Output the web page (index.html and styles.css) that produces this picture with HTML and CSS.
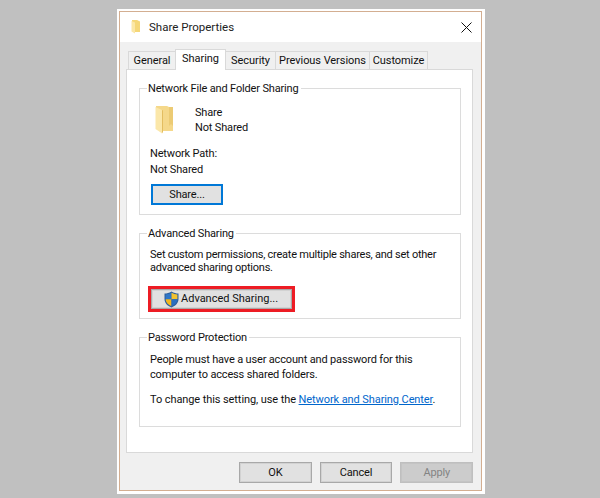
FILE: index.html
```html
<!DOCTYPE html>
<html lang="en">
<head>
<meta charset="utf-8">
<title>Share Properties</title>
<link rel="stylesheet" href="styles.css">
</head>
<body>
<div class="dialog">
  <header class="titlebar">
    <svg class="title-icon" width="10" height="14" viewBox="0 0 10 14">
      <path d="M1 0H6L9 1.5V12H4L1 10Z" fill="#f5d778"/>
      <path d="M0.5 1L4 2.5V13.5L0.5 11.5Z" fill="#fbe7a6"/>
    </svg>
    <span class="title">Share Properties</span>
    <svg class="close" width="11" height="11" viewBox="0 0 11 11">
      <path d="M0.5 0.5L10.5 10.5M10.5 0.5L0.5 10.5" stroke="#111" stroke-width="1" fill="none"/>
    </svg>
  </header>
  <main class="body">
    <nav class="tabs">
      <span class="tab tab-general">General</span>
      <span class="tab tab-active">Sharing</span>
      <span class="tab tab-security">Security</span>
      <span class="tab tab-previous">Previous Versions</span>
      <span class="tab tab-customize">Customize</span>
    </nav>
    <section class="panel">
      <fieldset class="group group-network">
        <legend>Network File and Folder Sharing</legend>
        <div class="share-row">
          <svg class="folder" width="20" height="28" viewBox="0 0 20 28">
            <path d="M1 0H12L14 1H18V25H8L1 21Z" fill="#f5d88a"/>
            <path d="M14 1H18V20L16 18L14 20Z" fill="#eccb74"/>
            <path d="M0.5 1L7 4V27.5L5 26L0.5 23Z" fill="#fbe7a9"/>
            <path d="M7 4V27.5L8 26V4.5Z" fill="#e3bd60"/>
          </svg>
          <div class="share-text">
            <div>Share</div>
            <div>Not Shared</div>
          </div>
        </div>
        <div class="path-label">Network Path:</div>
        <div class="path-value">Not Shared</div>
        <button class="btn btn-share" type="button">Share...</button>
      </fieldset>
      <fieldset class="group group-advanced">
        <legend>Advanced Sharing</legend>
        <p class="advanced-text">Set custom permissions, create multiple shares, and set other<br>advanced sharing options.</p>
        <div class="highlight">
          <button class="btn btn-advanced" type="button">
            <svg class="shield" width="15" height="17" viewBox="0 0 15 17">
              <path d="M7.5 0.5C10 2 12 2.5 14.5 2.5V8C14.5 12 11.5 15 7.5 16.5C3.5 15 0.5 12 0.5 8V2.5C3 2.5 5 2 7.5 0.5Z" fill="#2d5f9e"/>
              <path d="M7.5 1.8V8.2H1.6V3.4C3.6 3.3 5.6 2.8 7.5 1.8Z" fill="#2f77c9"/>
              <path d="M7.5 1.8C9.4 2.8 11.4 3.3 13.4 3.4V8.2H7.5Z" fill="#f2c230"/>
              <path d="M1.6 8.2H7.5V15.2C4.2 13.8 1.7 11.5 1.6 8.2Z" fill="#f2b81f"/>
              <path d="M7.5 8.2H13.4C13.3 11.5 10.8 13.8 7.5 15.2Z" fill="#2a6fc0"/>
            </svg>
            <span>Advanced Sharing...</span>
          </button>
        </div>
      </fieldset>
      <fieldset class="group group-password">
        <legend>Password Protection</legend>
        <p class="password-text">People must have a user account and password for this<br>computer to access shared folders.</p>
        <p class="password-link">To change this setting, use the <a href="#">Network and Sharing Center</a>.</p>
      </fieldset>
    </section>
    <footer class="actions">
      <button class="btn" type="button">OK</button>
      <button class="btn" type="button">Cancel</button>
      <button class="btn btn-disabled" type="button">Apply</button>
    </footer>
  </main>
</div>
</body>
</html>
```
FILE: styles.css
```css
* { box-sizing: border-box; }
html, body { margin: 0; height: 100%; }
body {
  background: #c0c0c0;
  padding: 9px 0 0 117px;
  font-family: "Roboto", "Open Sans", sans-serif;
  font-size: 11px;
  letter-spacing: -0.16px;
  line-height: 15.5px;
  color: #111;
  white-space: nowrap;
}
.dialog {
  width: 368px;
  height: 485px;
  background: #fff;
  padding: 2px 3px 3px 2px;
  display: flex;
  flex-direction: column;
}
.titlebar {
  flex: none;
  height: 31px;
  display: flex;
  align-items: center;
  background: #fff;
  border: 1px solid #d3ae91;
  border-bottom: 0;
  padding: 0 9px 0 11px;
}
.title-icon { flex: none; margin-right: 8px; }
.title { flex: 1; color: #222; font-size: 11.5px; letter-spacing: 0; padding-top: 1px; }
.body {
  flex: 1;
  background: #f0f0f0;
  border: 1px solid #d3ae91;
  border-top: 0;
  padding: 7px 8px 0 6px;
  display: flex;
  flex-direction: column;
}
.tabs {
  display: flex;
  align-items: flex-end;
  height: 20px;
  padding-left: 2px;
  position: relative;
  z-index: 1;
}
.tab {
  height: 18px;
  padding-top: 1px;
  background: #f0f0f0;
  border: 1px solid #d9d9d9;
  border-bottom: 0;
  margin-left: -1px;
  display: flex;
  align-items: center;
  justify-content: center;
  color: #111;
  letter-spacing: -0.06px;
}
.tab-general { width: 48px; margin-left: 0; }
.tab-active {
  width: 51px;
  height: 21px;
  background: #fff;
  margin-bottom: -1px;
  padding: 0 0 3px;
  z-index: 1;
}
.tab-security { width: 51px; }
.tab-previous { width: 95px; }
.tab-customize { width: 59px; }
.panel {
  width: 347px;
  height: 384px;
  background: #fff;
  border: 1px solid #d9d9d9;
  padding: 9px 11px 0 12px;
  display: flex;
  flex-direction: column;
}
.group {
  margin: 0;
  min-width: 0;
  border: 1px solid #dcdcdc;
  padding: 0 0 0 10px;
  flex: none;
}
.group legend {
  margin-left: -3px;
  padding: 2px 2px 0 1px;
  color: #111;
  line-height: 16px;
}
.group-network { height: 136px; }
.group-advanced { height: 95px; margin-top: 9px; }
.group-password { height: 99px; margin-top: 9px; }
.share-row {
  display: flex;
  padding: 8px 0 0 5px;
}
.folder { flex: none; margin-top: 1px; }
.share-text { margin-left: 20px; line-height: 15px; }
.path-label { margin-top: 11px; }
.btn {
  display: flex;
  align-items: center;
  justify-content: center;
  font: inherit;
  letter-spacing: inherit;
  color: #111;
  width: 73px;
  height: 21px;
  padding: 0;
  background: #e1e1e1;
  border: 1px solid #a8a8a8;
  box-shadow: inset 0 0 0 1px #d2d2d2;
  border-radius: 0;
}
.btn-share {
  margin: 7px 0 0 1px;
  width: 72px;
  border: 2px solid #0078d7;
  box-shadow: none;
}
p { margin: 0; }
.advanced-text { padding-top: 6px; line-height: 13px; letter-spacing: -0.24px; }
.highlight {
  width: 147px;
  height: 26px;
  margin: 12px 0 0 -2px;
  border: 3px solid #ed1c24;
}
.btn-advanced {
  width: 141px;
  height: 20px;
  gap: 2px;
  justify-content: flex-start;
  padding-left: 12px;
  letter-spacing: 0;
}
.shield { flex: none; }
.password-text { padding-top: 7px; line-height: 14.5px; }
.password-link { margin-top: 10px; line-height: 15px; letter-spacing: -0.09px; }
.password-link a { color: #0066cc; }
.actions {
  display: flex;
  gap: 8px;
  padding: 9px 0 0 113px;
}
.actions .btn { width: 73px; height: 21px; }
.actions .btn-disabled {
  background: #cccccc;
  border-color: #bfbfbf;
  box-shadow: inset 0 0 0 1px #c4c4c4;
  color: #838383;
}
```
